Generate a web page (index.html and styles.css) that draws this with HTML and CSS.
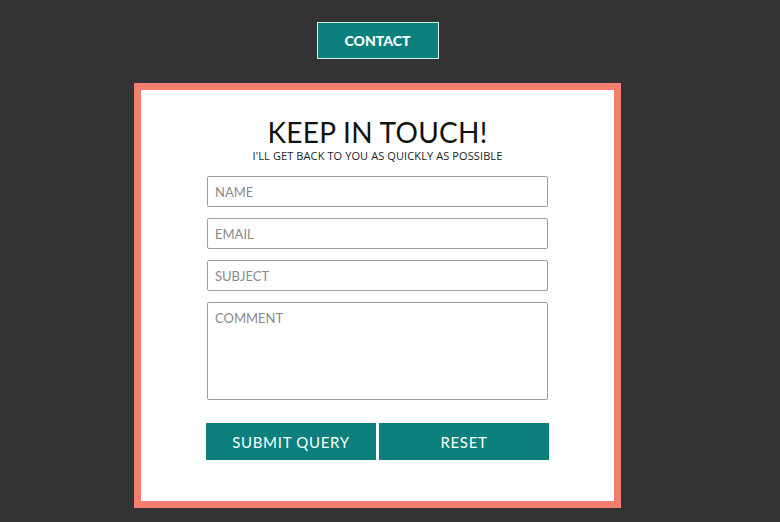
FILE: index.html
```html
<!DOCTYPE html>
<html>
<head>
<meta charset="utf-8">
<link rel="stylesheet" href="styles.css">
</head>
<body>
<div class="page">
  <button class="contact-btn">CONTACT</button>
  <div class="frame">
    <div class="card">
      <h1 class="title">KEEP IN TOUCH!</h1>
      <p class="subtitle">I'LL GET BACK TO YOU AS QUICKLY AS POSSIBLE</p>
      <form class="form">
        <input class="field" type="text" placeholder="NAME">
        <input class="field" type="text" placeholder="EMAIL">
        <input class="field" type="text" placeholder="SUBJECT">
        <textarea class="field area" placeholder="COMMENT"></textarea>
        <div class="actions">
          <button class="action" type="button">SUBMIT QUERY</button>
          <button class="action" type="button">RESET</button>
        </div>
      </form>
    </div>
  </div>
</div>
</body>
</html>
```

FILE: styles.css
```css
html, body {
  margin: 0;
  padding: 0;
  background: #333333;
  height: 100%;
}
body {
  font-family: "Lato", "Liberation Sans", sans-serif;
}
.page {
  width: 755px;
  display: flex;
  flex-direction: column;
  align-items: center;
  padding-top: 22px;
}
.contact-btn {
  width: 122px;
  height: 37px;
  background: #0b807c;
  border: 1px solid #d8efee;
  color: #ffffff;
  font-family: "Lato", sans-serif;
  font-weight: 900;
  font-size: 14px;
  letter-spacing: 0;
  padding: 0;
}
.frame {
  margin-top: 24px;
  border: 7px solid #f47e6f;
  background: #ffffff;
  width: 473px;
  box-sizing: content-box;
}
.card {
  display: flex;
  flex-direction: column;
  align-items: center;
  padding: 26px 0 41px;
}
.title {
  margin: 0;
  font-family: "Lato", sans-serif;
  font-weight: 400;
  font-size: 28px;
  line-height: 32px;
  color: #111111;
  letter-spacing: 0.3px;
}
.subtitle {
  margin: 1px 0 0;
  font-family: "Open Sans", sans-serif;
  font-size: 11px;
  line-height: 13px;
  color: #222222;
  letter-spacing: 0.1px;
}
.form {
  margin-top: 14px;
  width: 343px;
  display: flex;
  flex-direction: column;
  gap: 11px;
  align-items: center;
}
.field {
  width: 341px;
  height: 31px;
  box-sizing: border-box;
  border: 1px solid #9c9ca4;
  border-radius: 2px;
  padding: 0 7px;
  font-family: "Lato", sans-serif;
  font-size: 13px;
  color: #333;
  outline: none;
  margin: 0;
}
.field::placeholder {
  color: #8a8a8a;
}
.area {
  height: 98px;
  padding-top: 7px;
  resize: none;
  display: block;
}
.actions {
  margin-top: 12px;
  display: flex;
  gap: 3px;
  width: 343px;
}
.action {
  flex: 1;
  height: 37px;
  background: #0b807c;
  border: none;
  color: #ffffff;
  font-family: "Lato", sans-serif;
  font-size: 15px;
  letter-spacing: 0.7px;
  padding: 0;
}
```
